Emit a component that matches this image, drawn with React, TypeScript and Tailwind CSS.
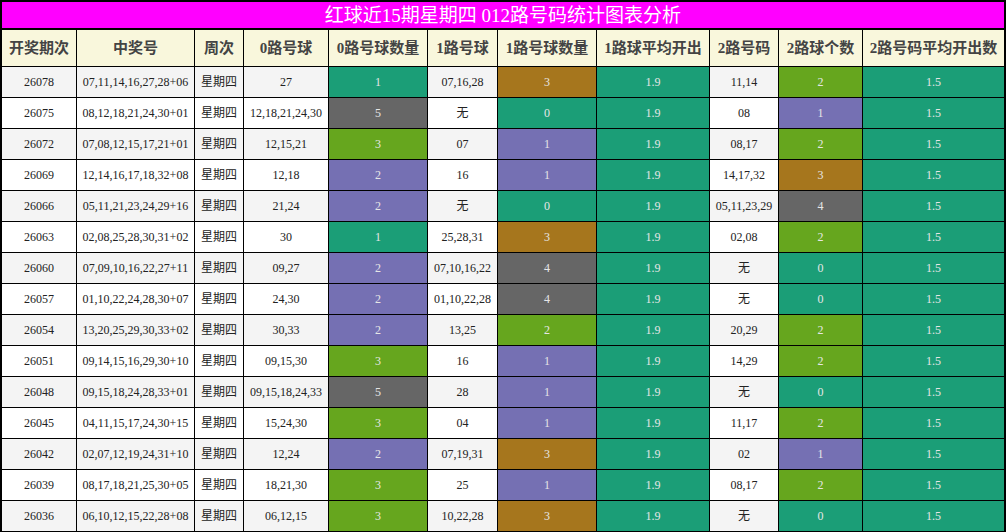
import React from "react";

type Tone = "teal" | "brown" | "gray" | "green" | "purple";

interface Draw {
  issue: string;
  numbers: string;
  zero: string;
  zeroCount: number;
  zeroTone: Tone;
  one: string;
  oneCount: number;
  oneTone: Tone;
  two: string;
  twoCount: number;
  twoTone: Tone;
}

const toneClass: Record<Tone, string> = {
  teal: "bg-[#1b9e77]",
  brown: "bg-[#a6761d]",
  gray: "bg-[#666666]",
  green: "bg-[#66a61e]",
  purple: "bg-[#7570b3]",
};

const draws: Draw[] = [
  { issue: "26078", numbers: "07,11,14,16,27,28+06", zero: "27", zeroCount: 1, zeroTone: "teal", one: "07,16,28", oneCount: 3, oneTone: "brown", two: "11,14", twoCount: 2, twoTone: "green" },
  { issue: "26075", numbers: "08,12,18,21,24,30+01", zero: "12,18,21,24,30", zeroCount: 5, zeroTone: "gray", one: "无", oneCount: 0, oneTone: "teal", two: "08", twoCount: 1, twoTone: "purple" },
  { issue: "26072", numbers: "07,08,12,15,17,21+01", zero: "12,15,21", zeroCount: 3, zeroTone: "green", one: "07", oneCount: 1, oneTone: "purple", two: "08,17", twoCount: 2, twoTone: "green" },
  { issue: "26069", numbers: "12,14,16,17,18,32+08", zero: "12,18", zeroCount: 2, zeroTone: "purple", one: "16", oneCount: 1, oneTone: "purple", two: "14,17,32", twoCount: 3, twoTone: "brown" },
  { issue: "26066", numbers: "05,11,21,23,24,29+16", zero: "21,24", zeroCount: 2, zeroTone: "purple", one: "无", oneCount: 0, oneTone: "teal", two: "05,11,23,29", twoCount: 4, twoTone: "gray" },
  { issue: "26063", numbers: "02,08,25,28,30,31+02", zero: "30", zeroCount: 1, zeroTone: "teal", one: "25,28,31", oneCount: 3, oneTone: "brown", two: "02,08", twoCount: 2, twoTone: "green" },
  { issue: "26060", numbers: "07,09,10,16,22,27+11", zero: "09,27", zeroCount: 2, zeroTone: "purple", one: "07,10,16,22", oneCount: 4, oneTone: "gray", two: "无", twoCount: 0, twoTone: "teal" },
  { issue: "26057", numbers: "01,10,22,24,28,30+07", zero: "24,30", zeroCount: 2, zeroTone: "purple", one: "01,10,22,28", oneCount: 4, oneTone: "gray", two: "无", twoCount: 0, twoTone: "teal" },
  { issue: "26054", numbers: "13,20,25,29,30,33+02", zero: "30,33", zeroCount: 2, zeroTone: "purple", one: "13,25", oneCount: 2, oneTone: "green", two: "20,29", twoCount: 2, twoTone: "green" },
  { issue: "26051", numbers: "09,14,15,16,29,30+10", zero: "09,15,30", zeroCount: 3, zeroTone: "green", one: "16", oneCount: 1, oneTone: "purple", two: "14,29", twoCount: 2, twoTone: "green" },
  { issue: "26048", numbers: "09,15,18,24,28,33+01", zero: "09,15,18,24,33", zeroCount: 5, zeroTone: "gray", one: "28", oneCount: 1, oneTone: "purple", two: "无", twoCount: 0, twoTone: "teal" },
  { issue: "26045", numbers: "04,11,15,17,24,30+15", zero: "15,24,30", zeroCount: 3, zeroTone: "green", one: "04", oneCount: 1, oneTone: "purple", two: "11,17", twoCount: 2, twoTone: "green" },
  { issue: "26042", numbers: "02,07,12,19,24,31+10", zero: "12,24", zeroCount: 2, zeroTone: "purple", one: "07,19,31", oneCount: 3, oneTone: "brown", two: "02", twoCount: 1, twoTone: "purple" },
  { issue: "26039", numbers: "08,17,18,21,25,30+05", zero: "18,21,30", zeroCount: 3, zeroTone: "green", one: "25", oneCount: 1, oneTone: "purple", two: "08,17", twoCount: 2, twoTone: "green" },
  { issue: "26036", numbers: "06,10,12,15,22,28+08", zero: "06,12,15", zeroCount: 3, zeroTone: "green", one: "10,22,28", oneCount: 3, oneTone: "brown", two: "无", twoCount: 0, twoTone: "teal" },
];

const headers = [
  "开奖期次",
  "中奖号",
  "周次",
  "0路号球",
  "0路号球数量",
  "1路号球",
  "1路号球数量",
  "1路球平均开出",
  "2路号码",
  "2路球个数",
  "2路号码平均开出数",
];

const font = "font-['Liberation_Serif','Noto_Sans_CJK_SC',serif]";

function Plain({ children, stripe }: { children: React.ReactNode; stripe: boolean }) {
  return (
    <div
      className={`flex items-center justify-center h-[30px] text-[12px] text-[#222] ${
        stripe ? "bg-[#f4f4f4]" : "bg-white"
      }`}
    >
      {children}
    </div>
  );
}

function Colored({ children, tone }: { children: React.ReactNode; tone: Tone }) {
  return (
    <div
      className={`flex items-center justify-center h-[30px] text-[12px] text-[#e6e6e6] ${toneClass[tone]}`}
    >
      {children}
    </div>
  );
}

export default function App() {
  return (
    <div className={`w-[1006px] h-[532px] overflow-hidden bg-black p-[2px] ${font}`}>
      <div className="h-[26px] bg-[#ff00ff] flex items-center justify-center text-white text-[19px] leading-none">
        红球近15期星期四 012路号码统计图表分析
      </div>
      <div className="mt-[2px] grid grid-cols-[74px_117px_48px_84px_98px_69px_98px_112px_68px_83px_141px] gap-px">
        {headers.map((h) => (
          <div
            key={h}
            className="h-[36px] flex items-center justify-center bg-[#f9f7dc] text-[#444] text-[15px] font-bold"
          >
            {h}
          </div>
        ))}
        {draws.map((d, i) => {
          const stripe = i % 2 === 0;
          return (
            <React.Fragment key={d.issue}>
              <Plain stripe={stripe}>{d.issue}</Plain>
              <Plain stripe={stripe}>{d.numbers}</Plain>
              <Plain stripe={stripe}>星期四</Plain>
              <Plain stripe={stripe}>{d.zero}</Plain>
              <Colored tone={d.zeroTone}>{d.zeroCount}</Colored>
              <Plain stripe={stripe}>{d.one}</Plain>
              <Colored tone={d.oneTone}>{d.oneCount}</Colored>
              <Colored tone="teal">1.9</Colored>
              <Plain stripe={stripe}>{d.two}</Plain>
              <Colored tone={d.twoTone}>{d.twoCount}</Colored>
              <Colored tone="teal">1.5</Colored>
            </React.Fragment>
          );
        })}
      </div>
    </div>
  );
}
